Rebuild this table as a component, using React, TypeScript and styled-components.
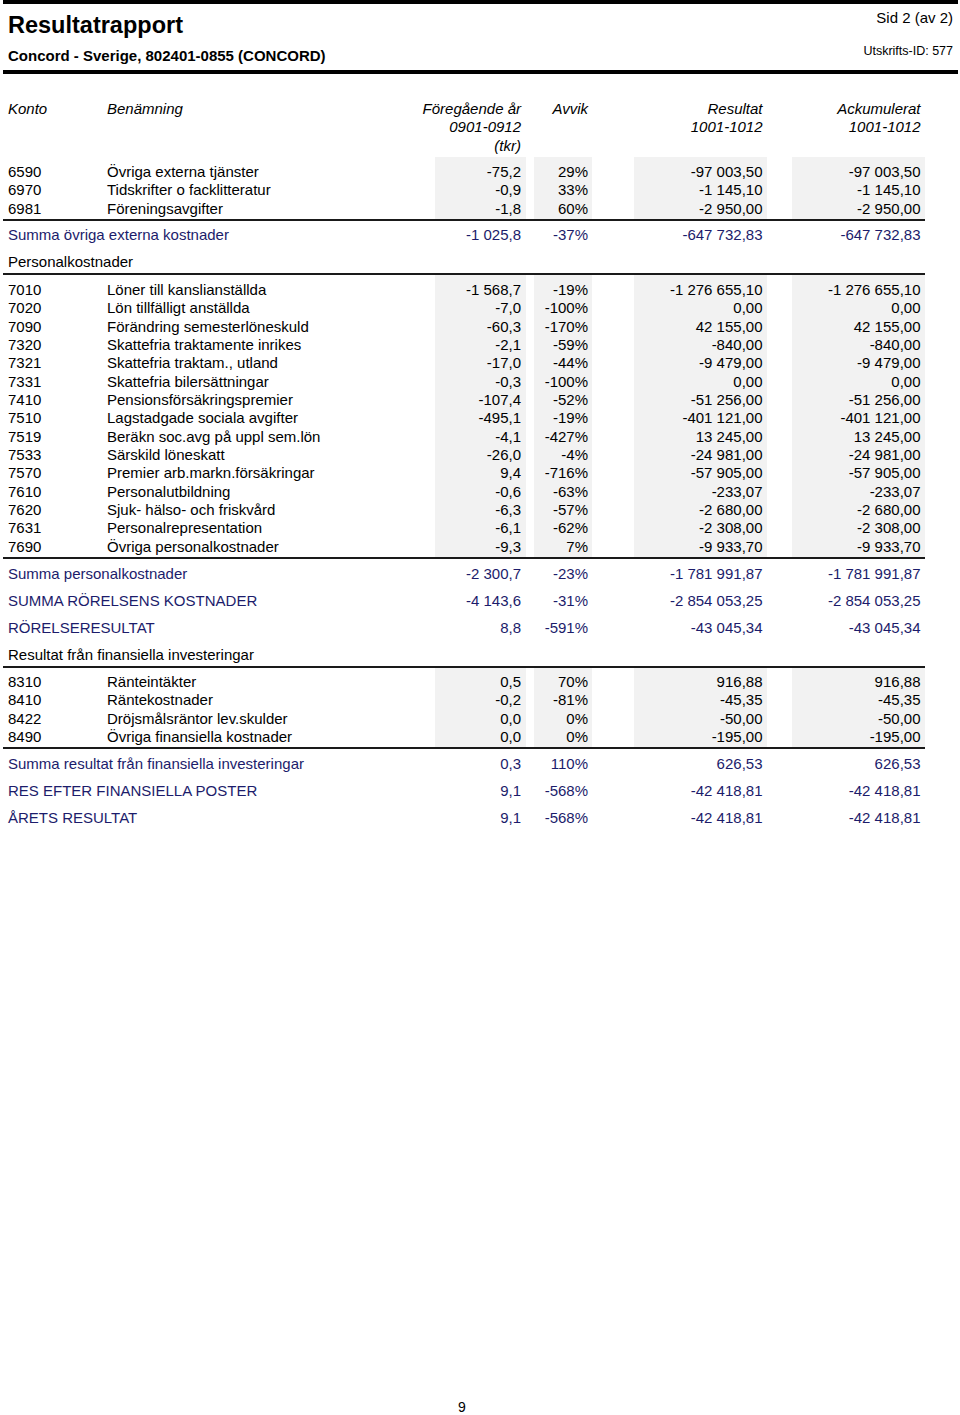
import React from 'react';
import styled, { createGlobalStyle, css } from 'styled-components';

const GlobalStyle = createGlobalStyle`
  html, body { margin: 0; padding: 0; background: #fff; }
  body { font-family: "Liberation Sans", Arial, sans-serif; color: #000; }
`;

const NAVY = '#1c1c6b';
const SHADE = '#f2f2f2';
const LINE = '#1a1a1a';

type Col = { w: number; ml: number; pr: number };
const COLS: Col[] = [
  { w: 91, ml: 0, pr: 5 },
  { w: 58, ml: 8, pr: 4 },
  { w: 133, ml: 42, pr: 4.5 },
  { w: 133, ml: 25, pr: 4.5 },
];

type Vals = [string, string, string, string];
type Line = { code: string; name: string; v: Vals };
type Sum = { label: string; v: Vals };
type Section = { title?: string; lines: Line[]; sums: Sum[] };

const SECTIONS: Section[] = [
  {
    lines: [
      { code: '6590', name: 'Övriga externa tjänster', v: ['-75,2', '29%', '-97 003,50', '-97 003,50'] },
      { code: '6970', name: 'Tidskrifter o facklitteratur', v: ['-0,9', '33%', '-1 145,10', '-1 145,10'] },
      { code: '6981', name: 'Föreningsavgifter', v: ['-1,8', '60%', '-2 950,00', '-2 950,00'] },
    ],
    sums: [{ label: 'Summa övriga externa kostnader', v: ['-1 025,8', '-37%', '-647 732,83', '-647 732,83'] }],
  },
  {
    title: 'Personalkostnader',
    lines: [
      { code: '7010', name: 'Löner till kanslianställda', v: ['-1 568,7', '-19%', '-1 276 655,10', '-1 276 655,10'] },
      { code: '7020', name: 'Lön tillfälligt anställda', v: ['-7,0', '-100%', '0,00', '0,00'] },
      { code: '7090', name: 'Förändring semesterlöneskuld', v: ['-60,3', '-170%', '42 155,00', '42 155,00'] },
      { code: '7320', name: 'Skattefria traktamente inrikes', v: ['-2,1', '-59%', '-840,00', '-840,00'] },
      { code: '7321', name: 'Skattefria traktam., utland', v: ['-17,0', '-44%', '-9 479,00', '-9 479,00'] },
      { code: '7331', name: 'Skattefria bilersättningar', v: ['-0,3', '-100%', '0,00', '0,00'] },
      { code: '7410', name: 'Pensionsförsäkringspremier', v: ['-107,4', '-52%', '-51 256,00', '-51 256,00'] },
      { code: '7510', name: 'Lagstadgade sociala avgifter', v: ['-495,1', '-19%', '-401 121,00', '-401 121,00'] },
      { code: '7519', name: 'Beräkn soc.avg på uppl sem.lön', v: ['-4,1', '-427%', '13 245,00', '13 245,00'] },
      { code: '7533', name: 'Särskild löneskatt', v: ['-26,0', '-4%', '-24 981,00', '-24 981,00'] },
      { code: '7570', name: 'Premier arb.markn.försäkringar', v: ['9,4', '-716%', '-57 905,00', '-57 905,00'] },
      { code: '7610', name: 'Personalutbildning', v: ['-0,6', '-63%', '-233,07', '-233,07'] },
      { code: '7620', name: 'Sjuk- hälso- och friskvård', v: ['-6,3', '-57%', '-2 680,00', '-2 680,00'] },
      { code: '7631', name: 'Personalrepresentation', v: ['-6,1', '-62%', '-2 308,00', '-2 308,00'] },
      { code: '7690', name: 'Övriga personalkostnader', v: ['-9,3', '7%', '-9 933,70', '-9 933,70'] },
    ],
    sums: [
      { label: 'Summa personalkostnader', v: ['-2 300,7', '-23%', '-1 781 991,87', '-1 781 991,87'] },
      { label: 'SUMMA RÖRELSENS KOSTNADER', v: ['-4 143,6', '-31%', '-2 854 053,25', '-2 854 053,25'] },
      { label: 'RÖRELSERESULTAT', v: ['8,8', '-591%', '-43 045,34', '-43 045,34'] },
    ],
  },
  {
    title: 'Resultat från finansiella investeringar',
    lines: [
      { code: '8310', name: 'Ränteintäkter', v: ['0,5', '70%', '916,88', '916,88'] },
      { code: '8410', name: 'Räntekostnader', v: ['-0,2', '-81%', '-45,35', '-45,35'] },
      { code: '8422', name: 'Dröjsmålsräntor lev.skulder', v: ['0,0', '0%', '-50,00', '-50,00'] },
      { code: '8490', name: 'Övriga finansiella kostnader', v: ['0,0', '0%', '-195,00', '-195,00'] },
    ],
    sums: [
      { label: 'Summa resultat från finansiella investeringar', v: ['0,3', '110%', '626,53', '626,53'] },
      { label: 'RES EFTER FINANSIELLA POSTER', v: ['9,1', '-568%', '-42 418,81', '-42 418,81'] },
      { label: 'ÅRETS RESULTAT', v: ['9,1', '-568%', '-42 418,81', '-42 418,81'] },
    ],
  },
];

const Page = styled.div`
  width: 960px;
  min-height: 1415px;
  display: flex;
  flex-direction: column;
`;

const Rule = styled.div<{ $mt: number; $h: number }>`
  height: ${p => p.$h}px;
  margin: ${p => p.$mt}px 2px 0 3px;
  background: #000;
`;

const Header = styled.header`
  display: grid;
  grid-template-columns: 1fr auto;
  padding: 0 7px 0 8px;
`;

const Title = styled.h1`
  margin: 8.7px 0 0;
  font-size: 23.5px;
  line-height: 24px;
  font-weight: bold;
`;

const PageOf = styled.div`
  align-self: start;
  margin-top: 4.8px;
  font-size: 15px;
  line-height: 18px;
  text-align: right;
`;

const Subtitle = styled.h2`
  margin: 10.8px 0 0;
  font-size: 15px;
  line-height: 18px;
  font-weight: bold;
`;

const PrintId = styled.div`
  align-self: start;
  margin-top: 7.6px;
  font-size: 12.5px;
  line-height: 14px;
  text-align: right;
`;

const Table = styled.div`
  margin: 25.9px 0 0 3px;
  width: 922px;
  font-size: 15px;
`;

const HeadRow = styled.div`
  display: flex;
  font-style: italic;
  line-height: 18.35px;
  margin-bottom: 2.5px;
`;

const CodeCell = styled.div`
  width: 104px;
  padding-left: 5px;
  box-sizing: border-box;
  flex: none;
`;

const NameCell = styled.div`
  width: 328px;
  flex: none;
  white-space: nowrap;
`;

const HeadNum = styled.div<{ $c: Col }>`
  display: flex;
  flex-direction: column;
  align-items: flex-end;
  flex: none;
  box-sizing: border-box;
  width: ${p => p.$c.w}px;
  margin-left: ${p => p.$c.ml}px;
  padding-right: ${p => p.$c.pr}px;
  white-space: nowrap;
`;

const Block = styled.div`
  border-bottom: 2px solid ${LINE};
`;

const DataRow = styled.div<{ $first?: boolean; $last?: boolean }>`
  display: flex;
  line-height: 18.35px;
  ${p => p.$first && css`& > * { padding-top: 5.5px; }`}
  ${p => p.$last && css`& > * { padding-bottom: 1px; }`}
`;

const NumCell = styled.div<{ $c: Col; $shaded?: boolean }>`
  flex: none;
  box-sizing: border-box;
  width: ${p => p.$c.w}px;
  margin-left: ${p => p.$c.ml}px;
  padding-right: ${p => p.$c.pr}px;
  text-align: right;
  white-space: nowrap;
  background: ${p => (p.$shaded ? SHADE : 'transparent')};
`;

const SumRow = styled.div`
  display: flex;
  color: ${NAVY};
  padding-top: 1.5px;
  line-height: 25.5px;
`;

const SumLabel = styled.div`
  width: 432px;
  padding-left: 5px;
  box-sizing: border-box;
  flex: none;
  white-space: nowrap;
`;

const SectionTitle = styled.div`
  padding: 3.5px 0 0 5px;
  line-height: 22px;
  border-bottom: 2px solid ${LINE};
`;

const Footer = styled.footer`
  margin-top: auto;
  width: 924px;
  text-align: center;
  font-size: 14px;
  line-height: 16px;
`;

export default function App() {
  return (
    <Page>
      <GlobalStyle />
      <Rule $mt={0} $h={4} />
      <Header>
        <Title>Resultatrapport</Title>
        <PageOf>Sid 2 (av 2)</PageOf>
        <Subtitle>Concord - Sverige, 802401-0855 (CONCORD)</Subtitle>
        <PrintId>Utskrifts-ID: 577</PrintId>
      </Header>
      <Rule $mt={5} $h={3.5} />
      <Table>
        <HeadRow>
          <CodeCell>Konto</CodeCell>
          <NameCell>Benämning</NameCell>
          <HeadNum $c={COLS[0]}>
            <span>Föregående år</span>
            <span>0901-0912</span>
            <span>(tkr)</span>
          </HeadNum>
          <HeadNum $c={COLS[1]}>
            <span>Avvik</span>
          </HeadNum>
          <HeadNum $c={COLS[2]}>
            <span>Resultat</span>
            <span>1001-1012</span>
          </HeadNum>
          <HeadNum $c={COLS[3]}>
            <span>Ackumulerat</span>
            <span>1001-1012</span>
          </HeadNum>
        </HeadRow>
        {SECTIONS.map((s, si) => (
          <React.Fragment key={si}>
            {s.title && <SectionTitle>{s.title}</SectionTitle>}
            <Block>
              {s.lines.map((l, i) => (
                <DataRow key={l.code} $first={i === 0} $last={i === s.lines.length - 1}>
                  <CodeCell>{l.code}</CodeCell>
                  <NameCell>{l.name}</NameCell>
                  {l.v.map((v, k) => (
                    <NumCell key={k} $c={COLS[k]} $shaded>
                      {v}
                    </NumCell>
                  ))}
                </DataRow>
              ))}
            </Block>
            {s.sums.map(sum => (
              <SumRow key={sum.label}>
                <SumLabel>{sum.label}</SumLabel>
                {sum.v.map((v, k) => (
                  <NumCell key={k} $c={COLS[k]}>
                    {v}
                  </NumCell>
                ))}
              </SumRow>
            ))}
          </React.Fragment>
        ))}
      </Table>
      <Footer>9</Footer>
    </Page>
  );
}
